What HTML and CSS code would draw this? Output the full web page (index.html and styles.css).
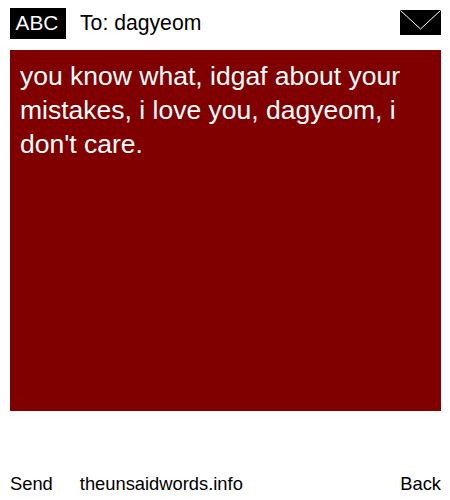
FILE: index.html
```html
<!DOCTYPE html>
<html lang="en">
<head>
	<meta charset="UTF-8">
	<title>The Unsaid Words</title>
	<link rel="stylesheet" href="styles.css">
</head>
<body>
	<div class="phone">
		<div class="top">
			<span class="abc">ABC</span>
			<span class="to">To: dagyeom</span>
			<svg class="envelope" width="41" height="25" viewBox="0 0 41 25">
				<rect width="41" height="25" fill="#000"/>
				<path d="M0.5 0.5 L20.5 19 L40.5 0.5" fill="none" stroke="#fff" stroke-width="1"/>
			</svg>
		</div>
		<div class="message">you know what, idgaf about your mistakes, i love you, dagyeom, i don't care.</div>
		<div class="bottom">
			<span class="send">Send</span>
			<span class="site">theunsaidwords.info</span>
			<span class="back">Back</span>
		</div>
	</div>
</body>
</html>
```

FILE: styles.css
```css
body {
  margin: 0;
  background-color: white;
  font-family: "Liberation Sans", Arial, sans-serif;
  color: black;
}
.phone {
  width: 431px;
  height: 500px;
  padding-left: 10px;
  display: flex;
  flex-direction: column;
}
.top {
  display: flex;
  align-items: center;
  height: 30px;
  margin-top: 8px;
  margin-bottom: 12px;
  font-size: 21.2px;
}
.abc {
  background-color: black;
  color: white;
  width: 54px;
  height: 31px;
  padding-right: 2px;
  font-size: 20.8px;
  line-height: 30px;
  text-align: center;
}
.to {
  margin-left: 14px;
}
.envelope {
  margin-left: auto;
  margin-top: -1px;
}
.message {
  background-color: #800000;
  color: white;
  height: 342px;
  padding: 9px 10px 10px;
  font-size: 26.5px;
  line-height: 34px;
}
.bottom {
  display: flex;
  margin-top: 61px;
  font-size: 18.33px;
  line-height: 24px;
}
.site {
  margin-left: 27px;
}
.back {
  margin-left: auto;
}
```
